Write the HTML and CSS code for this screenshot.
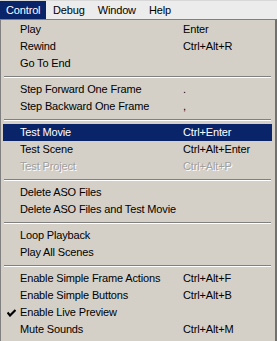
FILE: index.html
```html
<!DOCTYPE html>
<html>
<head>
<meta charset="utf-8">
<link rel="stylesheet" href="styles.css">
</head>
<body>
<div class="menubar">
  <div class="top-item active">Control</div>
  <div class="top-item">Debug</div>
  <div class="top-item">Window</div>
  <div class="top-item">Help</div>
</div>
<div class="dropdown">
  <div class="row"><span class="label">Play</span><span class="key">Enter</span></div>
  <div class="row"><span class="label">Rewind</span><span class="key">Ctrl+Alt+R</span></div>
  <div class="row"><span class="label">Go To End</span><span class="key"></span></div>
  <div class="sep"></div>
  <div class="row"><span class="label">Step Forward One Frame</span><span class="key">.</span></div>
  <div class="row"><span class="label">Step Backward One Frame</span><span class="key">,</span></div>
  <div class="sep"></div>
  <div class="row selected"><span class="label">Test Movie</span><span class="key">Ctrl+Enter</span></div>
  <div class="row"><span class="label">Test Scene</span><span class="key">Ctrl+Alt+Enter</span></div>
  <div class="row disabled"><span class="label">Test Project</span><span class="key">Ctrl+Alt+P</span></div>
  <div class="sep"></div>
  <div class="row"><span class="label">Delete ASO Files</span><span class="key"></span></div>
  <div class="row"><span class="label">Delete ASO Files and Test Movie</span><span class="key"></span></div>
  <div class="sep"></div>
  <div class="row"><span class="label">Loop Playback</span><span class="key"></span></div>
  <div class="row"><span class="label">Play All Scenes</span><span class="key"></span></div>
  <div class="sep"></div>
  <div class="row"><span class="label">Enable Simple Frame Actions</span><span class="key">Ctrl+Alt+F</span></div>
  <div class="row"><span class="label">Enable Simple Buttons</span><span class="key">Ctrl+Alt+B</span></div>
  <div class="row"><span class="check"><svg width="9" height="8" viewBox="0 0 9 8"><path d="M0.5 3.5 L3 6.5 L8.5 1" fill="none" stroke="#000" stroke-width="2.2"/></svg></span><span class="label">Enable Live Preview</span><span class="key"></span></div>
  <div class="row"><span class="label">Mute Sounds</span><span class="key">Ctrl+Alt+M</span></div>
</div>
</body>
</html>
```
FILE: styles.css
```css
html, body {
  margin: 0;
  padding: 0;
  background: #d4d0c8;
  font-family: "Liberation Sans", Arial, sans-serif;
  font-size: 11px;
  letter-spacing: -0.15px;
  color: #000;
}
.menubar {
  display: flex;
  height: 18px;
  border-top: 1px solid #d8d8d8;
  background: #ececec;
}
.top-item {
  padding: 0 6px;
  line-height: 18px;
  margin-right: 1px;
}
.top-item.active {
  background: #0a246a;
  color: #fff;
  width: 34px;
}
.dropdown {
  border-top: 1px solid #808080;
  border-left: 1px solid #808080;
  border-right: 2px solid #707070;
  padding: 1px 3px 4px 2px;
  background: #d4d0c8;
}
.row {
  display: grid;
  grid-template-columns: 17px 163px 1fr;
  height: 17px;
  line-height: 17px;
  white-space: nowrap;
}
.row .label { grid-column: 2; }
.row .key { grid-column: 3; }
.check {
  grid-column: 1;
  display: flex;
  align-items: center;
  padding-left: 4px;
}
.row.selected {
  background: #0a246a;
  color: #fff;
}
.row.disabled {
  color: #a0a0a0;
  text-shadow: 1px 1px 0 #fff;
}
.sep {
  height: 9px;
  display: flex;
  flex-direction: column;
  justify-content: flex-start;
  padding: 0 1px;
}
.sep::before {
  content: "";
  display: block;
  margin-top: 4px;
  height: 1px;
  background: #808080;
  border-bottom: 1px solid #fff;
}
```
